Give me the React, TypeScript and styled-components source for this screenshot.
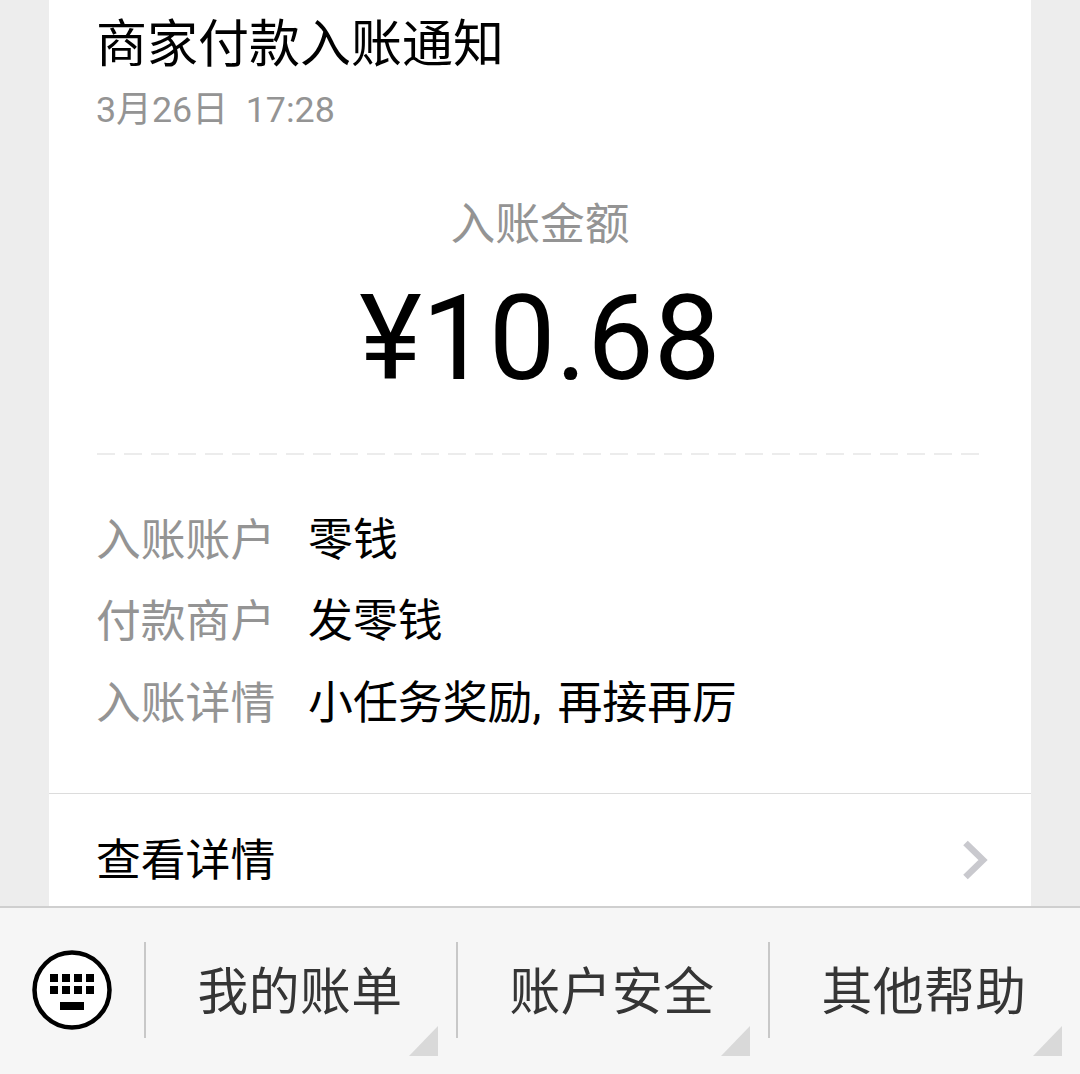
import React from "react";
import styled, { createGlobalStyle } from "styled-components";

const Global = createGlobalStyle`
  html, body { margin: 0; padding: 0; background: #ededed; }
  body { font-family: Roboto, "Noto Sans CJK SC", sans-serif; }
`;

const Page = styled.div`
  width: 1080px;
  height: 1074px;
  display: flex;
  flex-direction: column;
  overflow: hidden;
  background: #ededed;
`;

const Card = styled.main`
  flex: 1;
  min-height: 0;
  margin: 0 49px;
  background: #fff;
  display: flex;
  flex-direction: column;
`;

const Body = styled.section`
  height: 793px;
  box-sizing: border-box;
  padding: 15px 52px 0 47px;
`;

const Title = styled.h1`
  margin: 0;
  font-size: 51px;
  line-height: 60px;
  font-weight: 400;
  color: #000;
`;

const DateText = styled.div`
  margin-top: 11px;
  font-size: 35.8px;
  line-height: 48px;
  color: #949494;
  white-space: pre;
`;

const AmountLabel = styled.div`
  margin-top: 61px;
  text-align: center;
  font-size: 44.8px;
  line-height: 60px;
  color: #949494;
  padding-left: 5px;
`;

const Amount = styled.div`
  margin-top: 19px;
  text-align: center;
  font-size: 119px;
  line-height: 130px;
  color: #000;
  padding-left: 5px;
`;

const Dashed = styled.div`
  margin-top: 49px;
  height: 2px;
  margin-left: 1px;
  background: repeating-linear-gradient(to right, #ececec 0 18px, transparent 18px 27px);
`;

const Rows = styled.dl`
  margin: 51px 0 0;
  display: flex;
  flex-direction: column;
  gap: 21.5px;
`;

const Row = styled.div`
  display: flex;
  height: 60px;
  align-items: center;
`;

const RowLabel = styled.dt`
  width: 212px;
  flex: none;
  font-size: 44.8px;
  color: #949494;
`;

const RowValue = styled.dd`
  margin: 0;
  font-size: 44.9px;
  color: #000;
  white-space: nowrap;
  word-spacing: 5px;
`;

const Link = styled.div`
  flex: 1;
  border-top: 1px solid #dcdcdc;
  display: flex;
  align-items: center;
  justify-content: space-between;
  padding: 12px 42px 0 47px;
  font-size: 44.8px;
  color: #000;
`;

const ChevronSlot = styled.span`
  display: flex;
  padding-top: 8px;
  margin-right: 1px;
`;

const Footer = styled.footer`
  height: 168px;
  flex: none;
  box-sizing: border-box;
  border-top: 2px solid #cfcfcf;
  background: #f6f6f6;
  display: flex;
  align-items: flex-start;
  padding-top: 34px;
`;

const KeyboardCell = styled.div`
  width: 144px;
  height: 96px;
  flex: none;
  display: flex;
  align-items: center;
  justify-content: center;
`;

const MenuItem = styled.div`
  position: relative;
  width: 312px;
  height: 96px;
  flex: none;
  box-sizing: border-box;
  border-left: 2px solid #c8c8c8;
  display: flex;
  align-items: center;
  justify-content: center;
  padding: 0 2px 4px 0;
  font-size: 50.8px;
  color: #353535;
  letter-spacing: 0.4px;
`;

const Corner = styled.span`
  position: absolute;
  left: 263px;
  top: 84px;
  width: 29px;
  height: 30px;
  background: #d9d9d9;
  clip-path: polygon(100% 0, 100% 100%, 0 100%);
`;

const Keyboard = () => (
  <svg width="80" height="80" viewBox="0 0 80 80">
    <circle cx="40" cy="40" r="37.5" fill="#fff" stroke="#000" strokeWidth="4.5" />
    <g fill="#000">
      {[0, 1, 2, 3].map((i) => (
        <React.Fragment key={i}>
          <rect x={18 + i * 12} y="24" width="8" height="8" />
          <rect x={18 + i * 12} y="36" width="8" height="8" />
        </React.Fragment>
      ))}
      <rect x="28" y="52" width="24" height="8" />
    </g>
  </svg>
);

const Chevron = () => (
  <svg width="26" height="40" viewBox="0 0 26 40">
    <path d="M3.5 3 L21 20 L3.5 37" fill="none" stroke="#c9c9ce" strokeWidth="6.5" />
  </svg>
);

const rows = [
  ["入账账户", "零钱"],
  ["付款商户", "发零钱"],
  ["入账详情", "小任务奖励, 再接再厉"],
];

export default function App() {
  return (
    <Page>
      <Global />
      <Card>
        <Body>
          <Title>商家付款入账通知</Title>
          <DateText>3月26日  17:28</DateText>
          <AmountLabel>入账金额</AmountLabel>
          <Amount>¥10.68</Amount>
          <Dashed />
          <Rows>
            {rows.map(([k, v]) => (
              <Row key={k}>
                <RowLabel>{k}</RowLabel>
                <RowValue>{v}</RowValue>
              </Row>
            ))}
          </Rows>
        </Body>
        <Link>
          <span>查看详情</span>
          <ChevronSlot>
            <Chevron />
          </ChevronSlot>
        </Link>
      </Card>
      <Footer>
        <KeyboardCell>
          <Keyboard />
        </KeyboardCell>
        {["我的账单", "账户安全", "其他帮助"].map((t) => (
          <MenuItem key={t}>
            {t}
            <Corner />
          </MenuItem>
        ))}
      </Footer>
    </Page>
  );
}
